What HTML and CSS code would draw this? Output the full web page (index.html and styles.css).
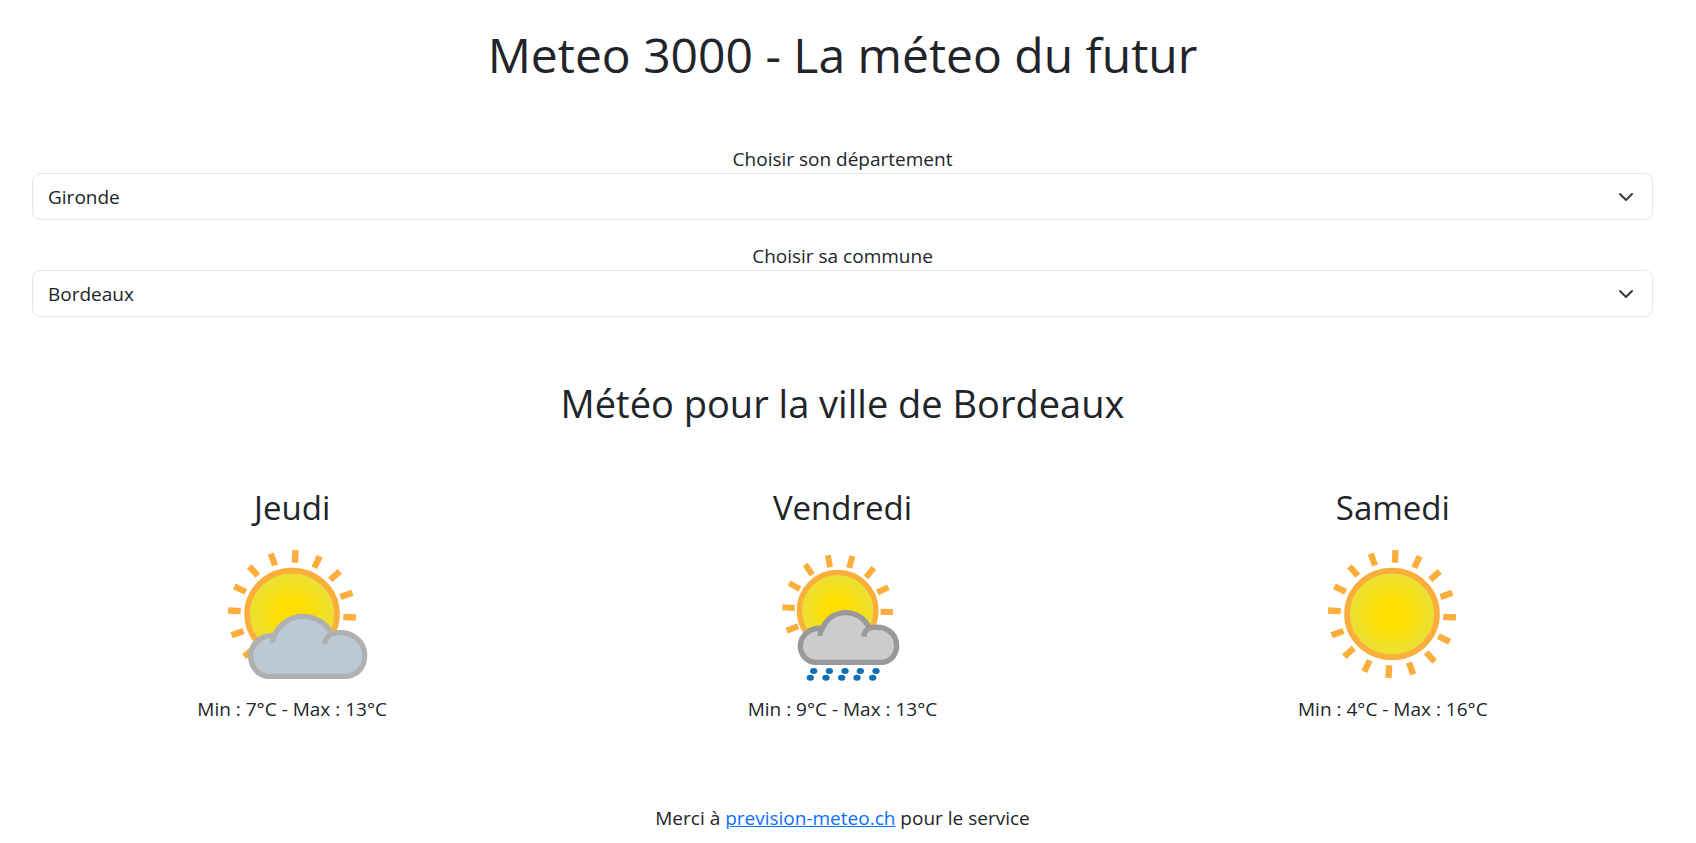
FILE: index.html
```html
<!DOCTYPE html>
<html lang="fr">
<head>
    <meta charset="UTF-8">
    <meta name="viewport" content="width=device-width, initial-scale=1.0">
    <title>Meteo 3000</title>
    <link rel="stylesheet" href="styles.css">
</head>
<body>
    <h1>Meteo 3000 - La méteo du futur</h1>

    <form class="choices">
        <div class="field">
            <label for="departement">Choisir son département</label>
            <select id="departement" class="form-select">
                <option selected>Gironde</option>
            </select>
        </div>
        <div class="field">
            <label for="commune">Choisir sa commune</label>
            <select id="commune" class="form-select">
                <option selected>Bordeaux</option>
            </select>
        </div>
    </form>

    <h2>Météo pour la ville de Bordeaux</h2>

    <svg class="defs" width="0" height="0" aria-hidden="true">
        <defs>
            <radialGradient id="sunFill">
                <stop offset="0.3" stop-color="#ffdf00"/>
                <stop offset="1" stop-color="#e8e03a"/>
            </radialGradient>
            <g id="ray"><rect x="154" y="-9" width="38" height="19"/></g>
            <g id="rays4">
                <use href="#ray"/>
                <use href="#ray" transform="rotate(22.5)"/>
                <use href="#ray" transform="rotate(45)"/>
                <use href="#ray" transform="rotate(67.5)"/>
            </g>
            <g id="sun">
                <g fill="#fbae3c" transform="rotate(3)">
                    <use href="#rays4"/>
                    <use href="#rays4" transform="rotate(90)"/>
                    <use href="#rays4" transform="rotate(180)"/>
                    <use href="#rays4" transform="rotate(270)"/>
                </g>
                <ellipse rx="135" ry="130" fill="url(#sunFill)" stroke="#fbae3c" stroke-width="17"/>
            </g>
        </defs>
    </svg>

    <div class="days">
        <div class="day">
            <h3>Jeudi</h3>
            <svg class="icon" viewBox="6 0 453 435" role="img" aria-label="Éclaircies">
                <use href="#sun" x="231" y="222"/>
                <path d="M160 409C128 409 107 378 107 348C107 312 138 284 178 286C194 252 226 229 262 229C302 229 334 250 349 281C410 268 449 303 449 347C449 382 425 409 390 409Z" fill="#bbcad4" stroke="#b0b0b0" stroke-width="16"/>
                <path d="M178 286Q173 296 173 310M349 281Q334 292 328 312" fill="none" stroke="#b0b0b0" stroke-width="16"/>
            </svg>
            <p>Min : 7°C - Max : 13°C</p>
        </div>
        <div class="day">
            <h3>Vendredi</h3>
            <svg class="icon" viewBox="-8 0 453 435" role="img" aria-label="Averses de pluie">
                <g fill="#fbae3c" transform="translate(204 213)">
                    <rect x="129" y="-9" width="37" height="18" transform="rotate(1)"/>
                    <rect x="131" y="-9" width="37" height="18" transform="rotate(-25)"/>
                    <rect x="132" y="-9" width="37" height="18" transform="rotate(-50)"/>
                    <rect x="134" y="-9" width="37" height="18" transform="rotate(-75)"/>
                    <rect x="133" y="-9" width="37" height="18" transform="rotate(-100)"/>
                    <rect x="133" y="-9" width="37" height="18" transform="rotate(-125)"/>
                    <rect x="131" y="-9" width="37" height="18" transform="rotate(-150)"/>
                    <rect x="129" y="-9" width="37" height="18" transform="rotate(-176)"/>
                    <rect x="127" y="-9" width="37" height="18" transform="rotate(-201)"/>
                </g>
                <ellipse cx="204" cy="212" rx="115" ry="115" fill="url(#sunFill)" stroke="#fbae3c" stroke-width="16"/>
                <path d="M140 367C112 367 92 345 92 319C92 285 122 262 158 265C172 235 198 218 228 218C260 218 288 237 298 264C350 252 381 282 381 318C381 347 358 367 335 367Z" fill="#ccc" stroke="#999" stroke-width="16"/>
                <path d="M158 265Q151 274 151 288M298 264Q285 272 282 290" fill="none" stroke="#999" stroke-width="16"/>
                <g fill="#0f70b7">
                    <g id="drop">
                        <ellipse cx="132" cy="393" rx="11" ry="9"/>
                        <ellipse cx="122" cy="413" rx="11" ry="9"/>
                    </g>
                    <use href="#drop" x="47"/>
                    <use href="#drop" x="94"/>
                    <use href="#drop" x="140"/>
                    <use href="#drop" x="187"/>
                </g>
            </svg>
            <p>Min : 9°C - Max : 13°C</p>
        </div>
        <div class="day">
            <h3>Samedi</h3>
            <svg class="icon" viewBox="6 0 453 435" role="img" aria-label="Ensoleillé">
                <use href="#sun" x="231" y="222"/>
            </svg>
            <p>Min : 4°C - Max : 16°C</p>
        </div>
    </div>

    <footer>Merci à <a href="https://www.prevision-meteo.ch">prevision-meteo.ch</a> pour le service</footer>
</body>
</html>
```

FILE: styles.css
```css
* { box-sizing: border-box; }
body { margin: 0; padding: 25px 28px 0 17px; font-family: "Open Sans", "Noto Sans", sans-serif; font-size: 19px; line-height: 28px; color: #212529; background: #fff; text-align: center; }
h1, h2, h3, p { margin: 0; font-weight: 400; }
h1 { font-size: 48px; line-height: 60px; }
h2 { font-size: 38px; line-height: 48px; margin-top: 62px; }
h3 { font-size: 33px; line-height: 42px; }
.choices { display: flex; flex-direction: column; gap: 22px; margin-top: 60px; padding: 0 15px; }
.field { display: flex; flex-direction: column; }
.form-select { width: 100%; height: 47px; padding: 0 45px 0 15px; border: 1px solid #e3e5e8; border-radius: 8px; appearance: none; font: inherit; color: inherit; background: #fff url("data:image/svg+xml,%3Csvg xmlns='http://www.w3.org/2000/svg' viewBox='0 0 16 16'%3E%3Cpath fill='none' stroke='%23343a40' stroke-linecap='round' stroke-linejoin='round' stroke-width='2' d='m2 5 6 6 6-6'/%3E%3C/svg%3E") no-repeat right 18px center / 16px 16px; }
.defs { position: absolute; }
.days { display: flex; margin-top: 60px; }
.day { flex: 1; display: flex; flex-direction: column; align-items: center; }
.icon { width: 151px; height: 145px; margin: 11px 0 10px; }
footer { margin-top: 81px; }
a { color: #0d6efd; text-decoration: underline; }
```
